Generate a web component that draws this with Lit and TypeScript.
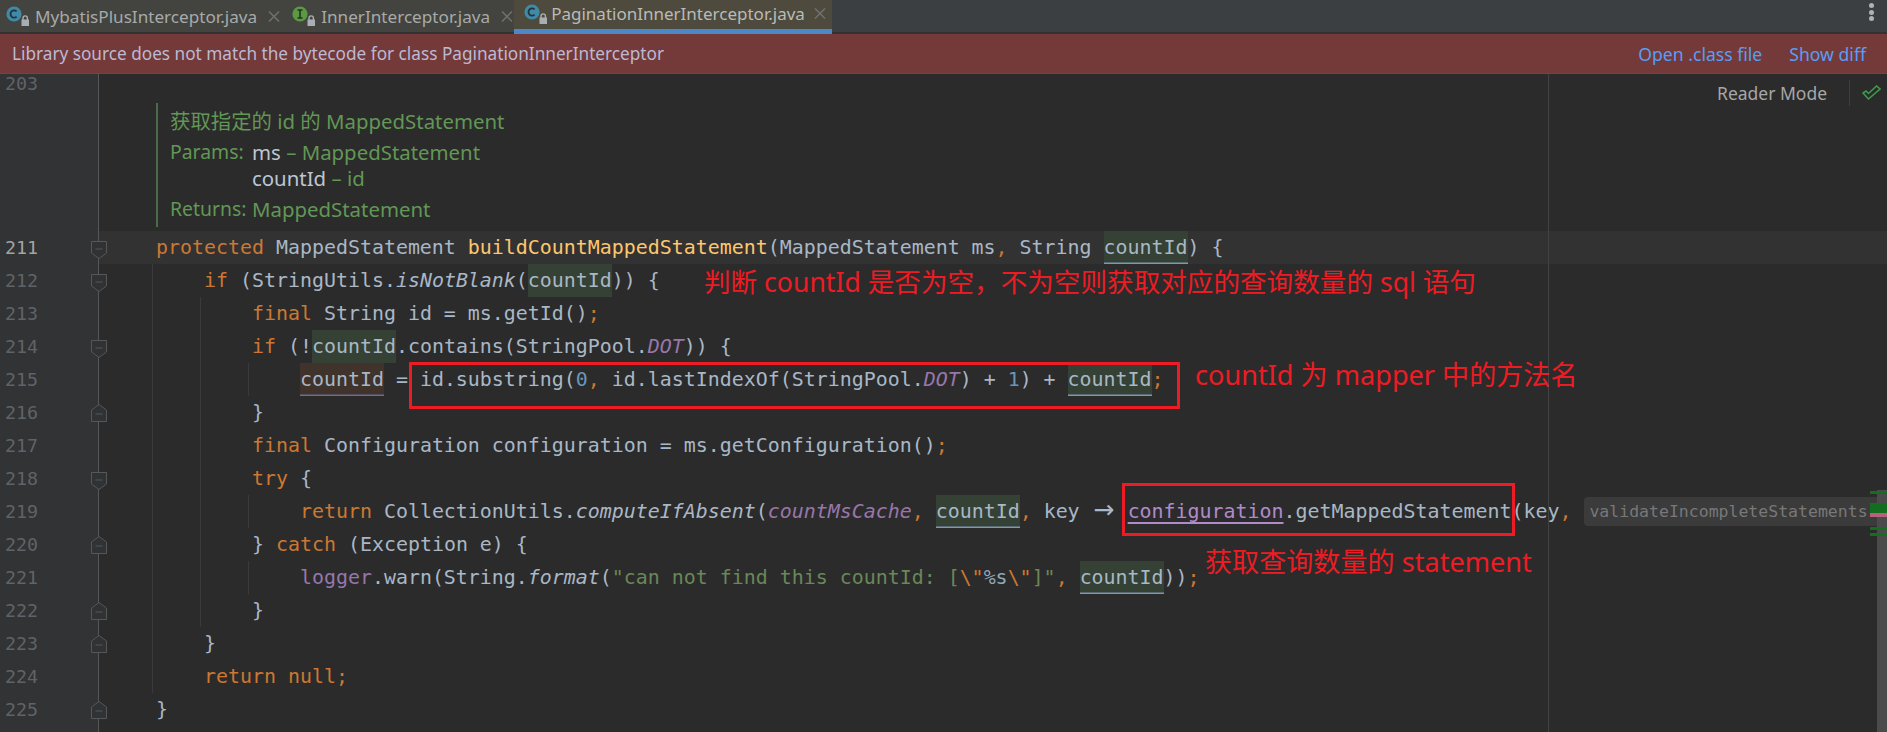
import { LitElement, html, css, svg, TemplateResult } from "lit";
import { customElement } from "lit/decorators.js";

const k = (s: string) => html`<span class="k">${s}</span>`;
const m = (s: string) => html`<span class="m">${s}</span>`;
const it = (s: string) => html`<span class="i">${s}</span>`;
const f = (s: string) => html`<span class="f">${s}</span>`;
const fi = (s: string) => html`<span class="f i">${s}</span>`;
const num = (s: string) => html`<span class="n">${s}</span>`;
const str = (s: string) => html`<span class="s">${s}</span>`;
const hl = (s: string) => html`<span class="hl">${s}</span>`;
const hlu = (s: string) => html`<span class="hl u">${s}</span>`;
const wr = (s: string) => html`<span class="wr">${s}</span>`;

interface Row {
  n?: number;
  code: TemplateResult;
  fold?: "start" | "end";
  guides: number[];
  active?: boolean;
}

const G1 = 53;
const G2 = 101;
const G3 = 149;

const rows: Row[] = [
  { n: 211, active: true, fold: "start", guides: [], code: html`${k("protected")} MappedStatement ${m("buildCountMappedStatement")}(MappedStatement ms${k(",")} String ${hlu("countId")}) {` },
  { n: 212, fold: "start", guides: [G1], code: html`    ${k("if")} (StringUtils.${it("isNotBlank")}(${hl("countId")})) {` },
  { n: 213, guides: [G1, G2], code: html`        ${k("final")} String id = ms.getId()${k(";")}` },
  { n: 214, fold: "start", guides: [G1, G2], code: html`        ${k("if")} (!${hl("countId")}.contains(StringPool.${fi("DOT")})) {` },
  { n: 215, guides: [G1, G2, G3], code: html`            ${wr("countId")} = id.substring(${num("0")}${k(",")} id.lastIndexOf(StringPool.${fi("DOT")}) + ${num("1")}) + ${hlu("countId")}${k(";")}` },
  { n: 216, fold: "end", guides: [G1, G2], code: html`        }` },
  { n: 217, guides: [G1, G2], code: html`        ${k("final")} Configuration configuration = ms.getConfiguration()${k(";")}` },
  { n: 218, fold: "start", guides: [G1, G2], code: html`        ${k("try")} {` },
  { n: 219, guides: [G1, G2, G3], code: html`            ${k("return")} CollectionUtils.${it("computeIfAbsent")}(${fi("countMsCache")}${k(",")} ${hlu("countId")}${k(",")} key <span class="arrow">→</span> <span class="cap">configuration</span>.getMappedStatement(key${k(",")}<span class="inlay">validateIncompleteStatements:</span>` },
  { n: 220, fold: "end", guides: [G1, G2], code: html`        } ${k("catch")} (Exception e) {` },
  { n: 221, guides: [G1, G2, G3], code: html`            ${f("logger")}.warn(String.${it("format")}(${str('"can not find this countId: [')}${k('\\"')}<span class="e">%s</span>${k('\\"')}${str(']"')}${k(",")} ${hlu("countId")}))${k(";")}` },
  { n: 222, fold: "end", guides: [G1, G2], code: html`        }` },
  { n: 223, fold: "end", guides: [G1], code: html`    }` },
  { n: 224, guides: [G1], code: html`    ${k("return null;")}` },
  { n: 225, fold: "end", guides: [], code: html`}` },
  { guides: [], code: html`` },
];

const foldStart = svg`<path d="M.5.5H15.5V12L8 17.5.5 12Z"/><path d="M4.5 8H11.5"/>`;
const foldEnd = svg`<path d="M.5 17.5H15.5V6L8 .5.5 6Z"/><path d="M4.5 10H11.5"/>`;

const fileIcon = (kind: "c" | "i") => html`
  <svg class="ficon" width="24" height="28" viewBox="0 0 24 28" aria-hidden="true">
    <circle cx="8" cy="12" r="7.6" fill=${kind === "c" ? "#3f8aa6" : "#5b9a42"}></circle>
    ${kind === "c"
      ? svg`<path d="M10.6 9.4A3.6 3.6 0 1 0 10.6 14.6" fill="none" stroke="#24343c" stroke-width="1.8"/>`
      : svg`<path d="M5.5 8H10.5M8 8V16M5.5 16H10.5" fill="none" stroke="#26331f" stroke-width="1.6"/>`}
    <rect x="15.5" y="17.5" width="7.5" height="6.5" fill="#a9aeb2"></rect>
    <path d="M17 18V16.1A2.2 2.2 0 0 1 21.4 16.1V18" fill="none" stroke="#a9aeb2" stroke-width="1.4"></path>
  </svg>`;

const closeX = html`<svg class="x" width="12" height="11" viewBox="0 0 12 11" aria-hidden="true"><path d="M1 .5L11 10.5M11 .5L1 10.5" fill="none" stroke="#6f716e" stroke-width="1.5"></path></svg>`;

@customElement("app-root")
export class AppRoot extends LitElement {
  static styles = css`
    :host { display: block; width: 100%; height: 732px; }
    * { box-sizing: border-box; }
    .root { position: relative; width: 100%; height: 732px; overflow: hidden; background: #2b2b2b; display: flex; flex-direction: column; font-family: "Noto Sans", "Noto Sans CJK SC", sans-serif; }
    .tabbar { height: 34px; flex: none; background: #3c3f41; border-bottom: 2px solid #323232; display: flex; justify-content: space-between; }
    .tabs { display: flex; height: 32px; }
    .tab { display: flex; align-items: center; height: 32px; background: #43443f; color: #a7aaa9; font-size: 17.15px; padding-left: 6px; }
    .tab .ficon { flex: none; margin-right: 5px; }
    .tab .x { flex: none; margin-left: 11px; margin-right: 6px; }
    .tab.second .x { margin-right: 1px; }
    .tab.active { position: relative; background: #4e4a3d; color: #b9bbb8; height: 34px; padding-bottom: 2px; border-bottom: 5px solid #4a88c7; padding-left: 10px; font-size: 17px; }
    .tab.active .ficon { margin-right: 3px; }
    .tab.active .x { margin-left: 9px; }
    .more { width: 32px; padding: 3px 0 0 14px; display: flex; flex-direction: column; gap: 1.6px; }
    .more i { display: block; width: 5px; height: 5px; border-radius: 50%; background: #afb1b3; }
    .banner { height: 40px; flex: none; background: #743a3a; border-bottom: 1px solid #56504f; display: flex; align-items: center; justify-content: space-between; padding: 0 21px 0 12px; font-size: 17.2px; color: #bcb9d2; }
    .links { display: flex; gap: 27px; color: #589df6; font-size: 17.6px; }
    .editor { flex: 1; min-height: 0; position: relative; font-family: "DejaVu Sans Mono", monospace; font-size: 19.93px; color: #a9b7c6; }
    .row { display: flex; height: 33px; line-height: 33px; }
    .row.active { background: #323232; }
    .gutter { flex: none; width: 99px; position: relative; background: #313335; border-right: 1px solid #555759; color: #606366; font-size: 18.3px; padding-left: 5px; }
    .row.active .gutter { color: #a4a3a3; }
    .row.first { height: 26px; }
    .row.first .gutter { line-height: 19px; }
    .fold { position: absolute; left: 91px; fill: #303234; stroke: #55585a; stroke-width: 1; }
    .fold.start { top: 10px; }
    .fold.end { top: 8px; }
    .code { flex: 1; min-width: 0; position: relative; white-space: pre; padding-left: 57px; overflow: hidden; }
    .guide { position: absolute; top: 0; bottom: 0; width: 1px; background: #3a3a3a; }
    .k { color: #cc7832; }
    .m { color: #ffc66d; }
    .i { font-style: italic; }
    .f { color: #9876aa; }
    .n { color: #6897bb; }
    .s { color: #6a8759; }
    .e { color: #8fa6b8; }
    .hl { display: inline-block; background: #344134; height: 33px; }
    .hl.u { box-shadow: inset 0 -1.5px 0 #7f97b5; line-height: 33px; }
    .wr { display: inline-block; height: 33px; background: #40332b; box-shadow: inset 0 -1.5px 0 #6e6c96; }
    .cap { color: #b08acb; text-decoration: underline; text-underline-offset: 4px; text-decoration-thickness: 1.5px; }
    .arrow { display: inline-block; width: 24px; text-align: center; font-family: "DejaVu Sans", sans-serif; font-size: 25px; line-height: 1; }
    .inlay { display: inline-block; margin-left: 13px; padding: 0 5px; height: 29px; line-height: 29px; background: #3b3b3b; border-radius: 4px; color: #787878; font-size: 16.5px; vertical-align: 1px; }
    .doc { margin: 3px 0 4px 57px; width: 800px; height: 124px; padding: 5px 0 5px 12px; border-left: 2px solid #4c6b4a; color: #629755; font-family: "Noto Sans", "Noto Sans CJK SC", sans-serif; font-size: 20.4px; line-height: 26px; display: grid; grid-template-columns: 82px 1fr; row-gap: 0; align-content: start; }
    .doc .wide { grid-column: 1 / 3; margin-bottom: 5px; }
    .doc .ret { margin-top: 5px; }
    .doc .lbl { font-size: 19.4px; }
    .doc b { font-weight: 400; color: #bdc6d2; }
    .doc-row { display: flex; height: 131px; }
    .doc-gutter { flex: none; width: 99px; background: #313335; border-right: 1px solid #555759; }
    .margin { position: absolute; left: 1548px; top: 0; bottom: 0; width: 1px; background: #424242; }
    .reader { position: absolute; right: 0; top: 6px; width: 170px; height: 26px; display: flex; align-items: center; font-family: "Noto Sans", sans-serif; font-size: 17.5px; color: #a5a7a8; }
    .reader span { margin-right: 22px; }
    .reader .sep { width: 1px; height: 26px; background: #3c3f41; margin-right: 12px; flex: none; }
    .scroll { position: absolute; left: 1877px; top: 416px; width: 10px; bottom: 0; background: #4b4b4b; }
    .mark { position: absolute; left: 1870px; width: 17px; }
    .mark.g { background: #136f1f; }
    .mark.p { background: #b8607c; }
    .box { position: absolute; border: 3px solid #ed1c24; }
    .note { position: absolute; color: #ed1c24; font-family: "Noto Sans", "Noto Sans CJK SC", sans-serif; font-size: 27.1px; line-height: 36px; white-space: pre; }
    .note.first { font-size: 26.6px; }
  `;

  private tab(name: string, kind: "c" | "i", cls = "") {
    return html`<div class="tab ${cls}">${fileIcon(kind)}<span>${name}</span>${closeX}</div>`;
  }

  private renderRow(r: Row) {
    return html`<div class="row ${r.active ? "active" : ""}">
      <div class="gutter">${r.n ?? ""}${r.fold
        ? html`<svg class="fold ${r.fold}" width="16" height="18" viewBox="0 0 16 18" aria-hidden="true">${r.fold === "start" ? foldStart : foldEnd}</svg>`
        : ""}</div>
      <div class="code">${r.guides.map((g) => html`<i class="guide" style="left:${g}px"></i>`)}${r.code}</div>
    </div>`;
  }

  render() {
    return html`<div class="root">
      <div class="tabbar">
        <div class="tabs">
          ${this.tab("MybatisPlusInterceptor.java", "c")}
          ${this.tab("InnerInterceptor.java", "i", "second")}
          ${this.tab("PaginationInnerInterceptor.java", "c", "active")}
        </div>
        <div class="more"><i></i><i></i><i></i></div>
      </div>
      <div class="banner">
        <span>Library source does not match the bytecode for class PaginationInnerInterceptor</span>
        <div class="links"><span>Open .class file</span><span>Show diff</span></div>
      </div>
      <div class="editor">
        <div class="row first"><div class="gutter">203</div><div class="code"></div></div>
        <div class="doc-row">
          <div class="doc-gutter"></div>
          <div class="doc">
            <div class="wide">获取指定的 id 的 MappedStatement</div>
            <div class="lbl">Params:</div><div><b>ms</b> – MappedStatement</div>
            <div></div><div><b>countId</b> – id</div>
            <div class="ret lbl">Returns:</div><div class="ret">MappedStatement</div>
          </div>
        </div>
        ${rows.map((r) => this.renderRow(r))}
        <i class="margin"></i>
        <div class="reader"><span>Reader Mode</span><i class="sep"></i>
          <svg width="19" height="16" viewBox="0 0 19 16" fill="none" stroke="#3f9a4a" stroke-width="1.6" aria-hidden="true"><path d="M1 8L6.5 14 18 4 14.5 1 6.5 8.5 4 6Z"></path></svg>
        </div>
        <i class="scroll"></i>
        <i class="mark g" style="top:417px;height:3px"></i>
        <i class="mark g" style="top:429px;height:10px"></i>
        <i class="mark p" style="top:439px;height:4px"></i>
        <i class="mark g" style="top:453px;height:3px"></i>
        <i class="mark g" style="top:459px;height:3px"></i>
      </div>
      <div class="box" style="left:409px;top:362px;width:771px;height:47px"></div>
      <div class="box" style="left:1122px;top:483px;width:393px;height:53px"></div>
      <div class="note first" style="left:704px;top:264px">判断 countId 是否为空，不为空则获取对应的查询数量的 sql 语句</div>
      <div class="note" style="left:1195px;top:357px">countId 为 mapper 中的方法名</div>
      <div class="note" style="left:1205px;top:544px">获取查询数量的 statement</div>
    </div>`;
  }
}
